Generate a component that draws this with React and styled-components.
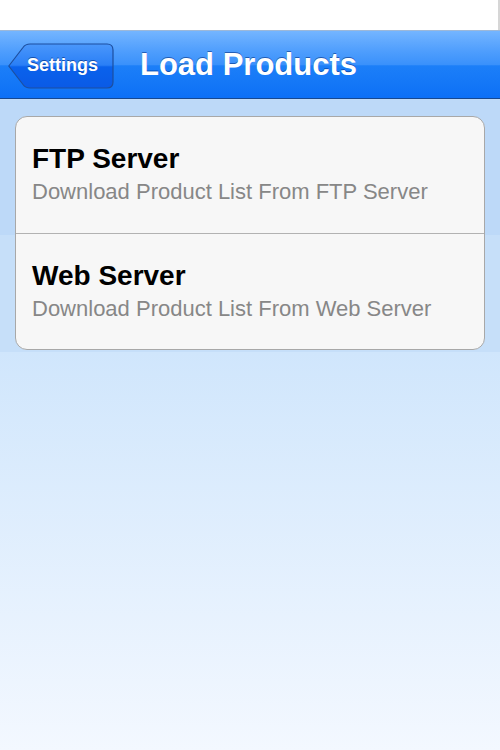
import React from 'react';
import styled, { createGlobalStyle } from 'styled-components';

const GlobalStyle = createGlobalStyle`
  html, body {
    margin: 0;
    padding: 0;
  }
  body {
    font-family: "Liberation Sans", Arial, Helvetica, sans-serif;
    background: #f3f8ff;
  }
`;

const Screen = styled.div`
  width: 500px;
  height: 750px;
  display: flex;
  flex-direction: column;
  overflow: hidden;
`;

const StatusBar = styled.div`
  height: 30px;
  flex-shrink: 0;
  background: #ffffff;
  border-right: 2px solid #d6d6d6;
  box-sizing: border-box;
`;

const NavBar = styled.header`
  height: 69px;
  flex-shrink: 0;
  box-sizing: border-box;
  display: flex;
  align-items: center;
  padding: 0 0 0 8px;
  gap: 26px;
  border-top: 1px solid #9db8d8;
  border-bottom: 1px solid #17488f;
  background: linear-gradient(
    to bottom,
    #74b5ff 0%,
    #4f9efd 30%,
    #3a91fb 50%,
    #1c7ff8 52%,
    #0d70f6 100%
  );
`;

const BackButton = styled.button`
  position: relative;
  width: 106px;
  height: 46px;
  margin-top: 2px;
  padding: 0 0 0 19px;
  border: none;
  background: none;
  display: flex;
  align-items: center;
  cursor: pointer;
`;

const BackShape = styled.svg`
  position: absolute;
  left: 0;
  top: 0;
`;

const BackLabel = styled.span`
  position: relative;
  font-size: 18px;
  font-weight: bold;
  color: #ffffff;
  text-shadow: 0 -1px 0 rgba(0, 40, 120, 0.6);
`;

const Title = styled.h1`
  margin: 0;
  font-size: 31px;
  font-weight: bold;
  color: #ffffff;
  text-shadow: 0 -1px 0 rgba(0, 40, 120, 0.55);
`;

const Content = styled.main`
  flex: 1;
  padding-top: 17px;
  background: linear-gradient(
    to bottom,
    #bdd9f8 0px,
    #bdd9f8 136px,
    #c6dff9 136px,
    #c6dff9 253px,
    #d0e6fc 253px,
    #f3f8ff 651px
  );
`;

const Card = styled.ul`
  list-style: none;
  margin: 0 15px;
  padding: 0;
  border: 1px solid #a8a8a8;
  border-radius: 12px;
  background: #f7f7f7;
  overflow: hidden;
`;

const Row = styled.li`
  height: 116px;
  box-sizing: border-box;
  padding: 26px 16px 0 16px;
  display: flex;
  flex-direction: column;
  gap: 4px;
  border-top: ${(p) => (p.$first ? 'none' : '1px solid #b2b2b2')};
`;

const RowTitle = styled.div`
  font-size: 28px;
  line-height: 32px;
  font-weight: bold;
  color: #000000;
`;

const RowSubtitle = styled.div`
  font-size: 22px;
  line-height: 25px;
  color: #878787;
`;

const sources = [
  { title: 'FTP Server', subtitle: 'Download Product List From FTP Server' },
  { title: 'Web Server', subtitle: 'Download Product List From Web Server' },
];

const App = () => (
  <Screen>
    <GlobalStyle />
    <StatusBar />
    <NavBar>
      <BackButton>
        <BackShape width="106" height="46" viewBox="0 0 106 46">
          <defs>
            <linearGradient id="backFill" x1="0" y1="0" x2="0" y2="1">
              <stop offset="0%" stopColor="#4a97fb" />
              <stop offset="48%" stopColor="#2a7ff6" />
              <stop offset="52%" stopColor="#0a62ec" />
              <stop offset="100%" stopColor="#0a5ae6" />
            </linearGradient>
          </defs>
          <path
            d="M0.8 23 L15 4.5 Q17.5 1 22 1 L99 1 Q105 1 105 7 L105 39 Q105 45 99 45 L22 45 Q17.5 45 15 41.5 Z"
            fill="url(#backFill)"
            stroke="#1d4f9f"
            strokeWidth="1.2"
          />
        </BackShape>
        <BackLabel>Settings</BackLabel>
      </BackButton>
      <Title>Load Products</Title>
    </NavBar>
    <Content>
      <Card>
        {sources.map((s, i) => (
          <Row key={s.title} $first={i === 0}>
            <RowTitle>{s.title}</RowTitle>
            <RowSubtitle>{s.subtitle}</RowSubtitle>
          </Row>
        ))}
      </Card>
    </Content>
  </Screen>
);

export default App;
